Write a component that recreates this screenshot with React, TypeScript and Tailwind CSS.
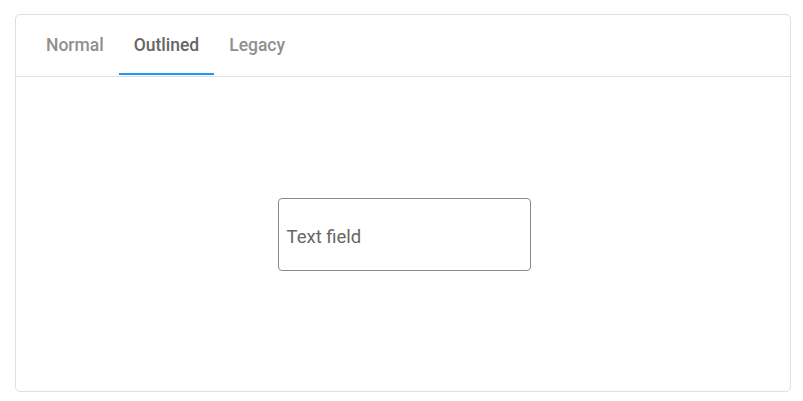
import { useState } from 'react'

const TABS = ['Normal', 'Outlined', 'Legacy'] as const

export default function App() {
  const [active, setActive] = useState<string>('Outlined')

  return (
    <div className="w-[803px] h-[401px] bg-white pt-[14px] pl-[15px] font-['Roboto',sans-serif]">
      <div className="w-[776px] h-[378px] rounded-[5px] border border-[#e0e0e0] flex flex-col overflow-hidden">
        <div className="flex pl-[15px] pb-px border-b border-[#e0e0e0]">
          {TABS.map(tab => (
            <button
              key={tab}
              type="button"
              onClick={() => setActive(tab)}
              className={`h-[60px] px-[15px] pt-[3px] text-[17.5px] font-medium border-b-2 ${
                active === tab ? 'text-[#666666] border-[#2196f3]' : 'text-[#8f8f8f] border-transparent'
              }`}
            >
              {tab}
            </button>
          ))}
        </div>

        <div className="flex-1 flex items-center justify-center pl-[2px]">
          <div className="w-[253px] h-[73px] rounded-[4px] border border-[#8a8a8a] flex items-center px-2 pt-[7px]">
            <span className="text-[18.5px] text-[#666666]">Text field</span>
          </div>
        </div>
      </div>
    </div>
  )
}
